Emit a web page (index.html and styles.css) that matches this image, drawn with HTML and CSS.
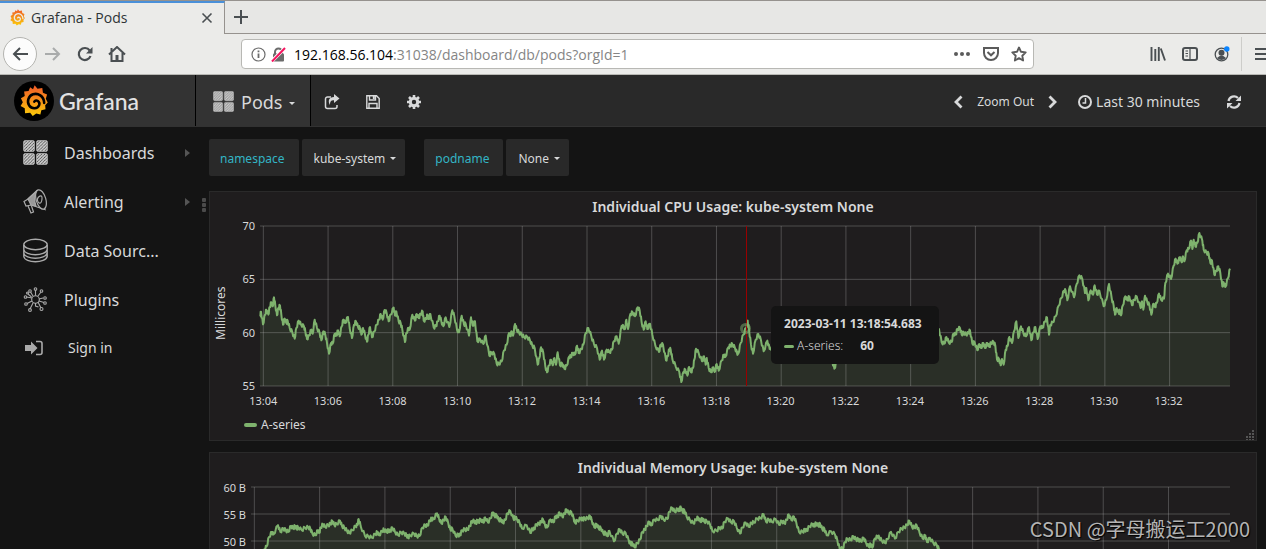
FILE: index.html
```html
<!DOCTYPE html>
<html lang="en">
<head>
<meta charset="utf-8">
<title>Grafana - Pods</title>
<link rel="stylesheet" href="styles.css">
</head>
<body>
<svg class="defs" aria-hidden="true">
  <defs>
    <linearGradient id="flame" x1="0" y1="0" x2="0" y2="1"><stop offset="0" stop-color="#f05a28"/><stop offset="1" stop-color="#fbca0a"/></linearGradient>
    <pattern id="hatch" width="3" height="3" patternUnits="userSpaceOnUse"><path d="M-1 1l2-2M0 3l3-3M2 4l2-2" stroke="#d0d0d0" stroke-width="1.700"/></pattern>
    <symbol id="gear" viewBox="14 10 94 100">
      <path fill="url(#flame)" d="M63 11l9 11 15-3 2 15 13 6-4 13 6 12-8 8 1 13-13 3-3 13-13-3-11 8-8-10-16 1-1-15-13-7 7-12-6-13 12-7-2-14 14-1 5-12 9 6z"/>
      <path fill="none" stroke="currentColor" stroke-width="8" stroke-linecap="round" d="M93 66C92 44 73 34 58 39C43 44 38 62 46 74C54 86 72 85 77 73C81 62 68 53 62 62"/>
    </symbol>
    <symbol id="tiles" viewBox="0 0 24 24">
      <g fill="url(#hatch)" stroke="#b8b8b8" stroke-width=".7"><rect x=".5" y=".5" width="10.500" height="10.500" rx="1.500"/><rect x="13" y=".5" width="10.500" height="10.500" rx="1.500"/><rect x=".5" y="13" width="10.500" height="10.500" rx="1.500"/><rect x="13" y="13" width="10.500" height="10.500" rx="1.500"/></g>
    </symbol>
  </defs>
</svg>

<header class="browser">
  <div class="tabs">
    <div class="tab">
      <svg class="favicon" aria-hidden="true"><use href="#gear"/></svg>
      <span class="tab-title">Grafana - Pods</span>
      <button class="plain" aria-label="Close tab"><svg width="12" height="12" viewBox="0 0 12 12"><path d="M1.500 1.500l9 9M10.500 1.500l-9 9" stroke="#4a4f52" stroke-width="1.600"/></svg></button>
    </div>
    <button class="new-tab" aria-label="New tab"><svg width="14" height="14" viewBox="0 0 14 14"><path d="M7 0v14M0 7h14" stroke="#4a4f52" stroke-width="2"/></svg></button>
  </div>
  <div class="toolbar">
    <button class="back" aria-label="Back"><svg width="18" height="16" viewBox="0 0 18 16"><path d="M17 8H3M9 2L3 8l6 6" fill="none" stroke="#4a4f52" stroke-width="2"/></svg></button>
    <button class="plain" aria-label="Forward"><svg width="18" height="16" viewBox="0 0 18 16"><path d="M1 8h14M9 2l6 6-6 6" fill="none" stroke="#a9abab" stroke-width="2"/></svg></button>
    <button class="plain" aria-label="Reload"><svg width="16" height="16" viewBox="0 0 16 16"><path d="M12.700 4.500A6 6 0 1 0 13.500 10" fill="none" stroke="#4a4f52" stroke-width="2.200"/><path d="M15.500 1v6.500H9z" fill="#4a4f52"/></svg></button>
    <button class="plain" aria-label="Home"><svg width="18" height="16" viewBox="0 0 18 16"><path d="M1 8.500L9 1l8 7.500M3.500 7v8h11V7M3.500 2v4" fill="none" stroke="#4a4f52" stroke-width="2"/><path d="M7.500 9h3v6h-3z" fill="#4a4f52"/></svg></button>
    <div class="address">
      <svg width="15" height="15" viewBox="0 0 15 15" aria-hidden="true"><circle cx="7.500" cy="7.500" r="6.500" fill="none" stroke="#6b6b6b" stroke-width="1.200"/><path d="M7.500 6.500V11M7.500 3.500v1.800" stroke="#6b6b6b" stroke-width="1.800"/></svg>
      <svg width="15" height="15" viewBox="0 0 15 15" aria-hidden="true"><path d="M4 7V5a3.500 3.500 0 0 1 7 0v2" fill="none" stroke="#6b6b6b" stroke-width="2"/><rect x="2" y="6.500" width="11" height="8" rx="1" fill="#6b6b6b"/><path d="M.5 14.500L14 1" stroke="#fff" stroke-width="3.500"/><path d="M1 14.500L14 1" stroke="#f5145f" stroke-width="2"/></svg>
      <a class="url" href="#">192.168.56.104<span class="url-path">:31038/dashboard/db/pods?orgId=1</span></a>
      <button class="plain" aria-label="Page actions"><svg width="18" height="16" viewBox="0 0 18 16" fill="#5b5b5b"><circle cx="3" cy="8" r="2"/><circle cx="9" cy="8" r="2"/><circle cx="15" cy="8" r="2"/></svg></button>
      <button class="plain" aria-label="Save to Pocket"><svg width="16" height="16" viewBox="0 0 16 16"><path d="M1 2h14v5a7 7 0 0 1-14 0zM4.500 6L8 9.300 11.500 6" fill="none" stroke="#5b5b5b" stroke-width="2"/></svg></button>
      <button class="plain" aria-label="Bookmark"><svg width="16" height="16" viewBox="0 0 16 16"><path d="M8 1.500l2 4.300 4.700.6-3.400 3.300.8 4.800L8 12.200l-4.100 2.300.8-4.800L1.300 6.400 6 5.800z" fill="none" stroke="#5b5b5b" stroke-width="1.900" stroke-linejoin="round"/></svg></button>
    </div>
    <div class="browser-tools">
      <button class="plain" aria-label="Library"><svg width="16" height="14" viewBox="0 0 16 14"><path d="M1.500 0v14M5.300 2v12M8.800 0v14M10.800 1.500L15 13.500" stroke="#4a4f52" stroke-width="1.900"/></svg></button>
      <button class="plain" aria-label="Sidebars"><svg width="16" height="14" viewBox="0 0 16 14"><rect x="1" y="1" width="14" height="12" rx="2" fill="none" stroke="#4a4f52" stroke-width="2"/><path d="M8 1v12M3.500 4H6M3.500 6.500H6M3.500 9H6" stroke="#4a4f52" stroke-width="1.200"/></svg></button>
      <button class="plain" aria-label="Account"><svg width="16" height="16" viewBox="0 0 16 16"><circle cx="7.500" cy="8.500" r="6.300" fill="none" stroke="#4a4f52" stroke-width="1.300"/><circle cx="7.500" cy="6.800" r="3" fill="#4a4f52"/><path d="M3 12q4.500-5 9 0-4.500 4-9 0" fill="#4a4f52"/><circle cx="12.800" cy="3" r="2.700" fill="#0a84ff"/></svg></button>
      <span class="tool-divider"></span>
      <button class="plain menu" aria-label="Menu"><svg width="16" height="14" viewBox="0 0 16 14"><path d="M0 2h16M0 7h16M0 12h16" stroke="#4a4f52" stroke-width="2"/></svg></button>
    </div>
  </div>
</header>

<div class="app">
  <nav class="navbar">
    <a class="brand" href="#">
      <span class="brand-mark"><svg width="30" height="32" aria-hidden="true"><use href="#gear"/></svg></span>
      <span class="brand-name">Grafana</span>
    </a>
    <button class="dashboard-picker"><svg width="21" height="21" aria-hidden="true"><use href="#tiles"/></svg><span>Pods</span><i class="caret"></i></button>
    <button class="nav-button" aria-label="Share"><svg width="16" height="16" viewBox="0 0 16 16"><path d="M7 3H3.500A2 2 0 0 0 1.500 5v7.500a2 2 0 0 0 2 2H11a2 2 0 0 0 2-2V11" fill="none" stroke="#d8d9da" stroke-width="1.500"/><path d="M10 0l5.500 4.500L10 9V6.300C7 6 5.800 7.500 6 11 3.500 7 5 3 10 3z" fill="#d8d9da"/></svg></button>
    <button class="nav-button" aria-label="Save"><svg width="14" height="14" viewBox="0 0 14 14"><path d="M.8.800h9.700l2.700 2.700v9.700H.8zM3 13V8.500h8V13M3.500 1v4h6V1" fill="none" stroke="#d8d9da" stroke-width="1.400"/><path d="M6.800 1h2v3h-2z" fill="#d8d9da"/></svg></button>
    <button class="nav-button" aria-label="Settings"><svg width="14" height="14" viewBox="0 0 14 14"><circle cx="7" cy="7" r="3.700" fill="none" stroke="#d8d9da" stroke-width="3"/><path d="M7 0v3M7 11v3M0 7h3M11 7h3M2 2l2 2M10 10l2 2M2 12l2-2M10 4l2-2" stroke="#d8d9da" stroke-width="2.600"/></svg></button>
    <div class="time-controls">
      <button class="nav-button" aria-label="Back in time"><svg width="9" height="14" viewBox="0 0 9 14"><path d="M7.500 1.500L2 7l5.500 5.500" fill="none" stroke="#d8d9da" stroke-width="2.800"/></svg></button>
      <button class="zoom-out">Zoom Out</button>
      <button class="nav-button" aria-label="Forward in time"><svg width="9" height="14" viewBox="0 0 9 14"><path d="M1.500 1.500L7 7l-5.500 5.500" fill="none" stroke="#d8d9da" stroke-width="2.800"/></svg></button>
      <button class="time-range"><svg width="14" height="14" viewBox="0 0 14 14" aria-hidden="true"><circle cx="7" cy="7" r="6" fill="none" stroke="#d8d9da" stroke-width="2"/><path d="M7.500 3v5H4.500" fill="none" stroke="#d8d9da" stroke-width="1.500"/></svg>Last 30 minutes</button>
      <button class="nav-button" aria-label="Refresh"><svg width="14" height="14" viewBox="0 0 14 14"><path d="M1.500 6A5.600 5.600 0 0 1 11 3M12.500 8A5.600 5.600 0 0 1 3 11" fill="none" stroke="#d8d9da" stroke-width="2.200"/><path d="M14 .5V6H8.500zM0 13.500V8h5.500z" fill="#d8d9da"/></svg></button>
    </div>
  </nav>

  <aside class="sidebar">
    <a href="#"><svg width="25" height="25" aria-hidden="true"><use href="#tiles"/></svg><span>Dashboards</span><i class="expand"></i></a>
    <a href="#"><svg width="25" height="25" viewBox="0 0 25 25" fill="none" stroke="#aaa" stroke-width="1.200" aria-hidden="true"><path d="M14 1.500L5 10 1 12.500 3 17l5-1 14 4.500z"/><path d="M14 2L5 10l3 6 5 1q-3-8 1-15" fill="#999"/><ellipse cx="18" cy="10.500" rx="4.800" ry="10" transform="rotate(-16 18 10.500)" fill="#141414"/><path d="M15.500 8q4-3 3.500 2t-3 4q-3-3-.5-6M5 17l3 7 2.500-1-2-6"/></svg><span>Alerting</span><i class="expand"></i></a>
    <a href="#"><svg width="25" height="25" viewBox="0 0 25 25" fill="none" stroke="#aaa" stroke-width="1.400" aria-hidden="true"><ellipse cx="12.500" cy="6.500" rx="11.700" ry="5.200"/><path d="M.8 7v4.500c1 7 22 7 23.400 0V7M.8 11.500v3.500c1 7 22 7 23.400 0v-3.500M.8 15v3.500c1 7 22 7 23.400 0V15"/></svg><span>Data Sourc...</span></a>
    <a href="#"><svg width="25" height="25" viewBox="0 0 25 25" fill="none" stroke="#aaa" stroke-width="1.100" aria-hidden="true"><circle cx="12.500" cy="12.500" r="3.800"/><path d="M12.500 8.500V3M12.500 16v3l3 1M16 14l5 1.500M9 14l-5 2.500M9 11L3.500 10M15 9l3-4M10 9L7.500 5M10 16l-3 6M16 12l4-1M15 15l3 6M8.500 10L5 7"/><circle cx="12.500" cy="2" r="1.300"/><circle cx="18.500" cy="4" r="1.300"/><circle cx="7" cy="4" r="1.300"/><circle cx="22" cy="11" r="1.300"/><circle cx="22" cy="16" r="1.300"/><circle cx="18.500" cy="22" r="1.500"/><circle cx="7" cy="23" r="1.400"/><circle cx="3" cy="17" r="1.300"/><circle cx="2.500" cy="10" r="1.300"/><circle cx="4.500" cy="6" r="1"/></svg><span>Plugins</span></a>
    <a class="sign-in" href="#"><svg width="18" height="16" viewBox="0 0 18 16" aria-hidden="true"><path d="M0 5h6V1.500L12.500 8 6 14.500V11H0z" fill="#aaa"/><path d="M11 1.500h4a2 2 0 0 1 2 2v9a2 2 0 0 1-2 2h-4" fill="none" stroke="#aaa" stroke-width="1.600"/></svg><span>Sign in</span></a>
  </aside>

  <main class="dashboard">
    <form class="variables">
      <div class="variable">
        <label for="namespace">namespace</label>
        <div class="choice"><select id="namespace"><option>kube-system</option></select><i class="caret"></i></div>
      </div>
      <div class="variable">
        <label for="podname">podname</label>
        <div class="choice"><select id="podname"><option>None</option></select><i class="caret"></i></div>
      </div>
    </form>

    <div class="row">
      <div class="row-handle"><i></i><i></i><i></i></div>
      <section class="panel">
        <h2>Individual CPU Usage: kube-system None</h2>
        <div class="graph">
          <span class="axis-name">Millicores</span>
          <div class="y-axis"><span>70</span><span>65</span><span>60</span><span>55</span></div>
          <div class="plot">
            <svg id="cpu" viewBox="165 19 2910 480" preserveAspectRatio="none" role="img" aria-label="CPU usage"></svg>
            <i class="crosshair"></i><i class="hover-point"></i>
            <div class="tooltip"><strong>2023-03-11 13:18:54.683</strong><div class="tooltip-row"><i class="swatch"></i><span>A-series:</span><b>60</b></div></div>
          </div>
          <div class="x-axis"><span>13:04</span><span>13:06</span><span>13:08</span><span>13:10</span><span>13:12</span><span>13:14</span><span>13:16</span><span>13:18</span><span>13:20</span><span>13:22</span><span>13:24</span><span>13:26</span><span>13:28</span><span>13:30</span><span>13:32</span></div>
        </div>
        <a class="legend" href="#"><i class="swatch"></i>A-series</a>
        <svg class="resize" width="10" height="10" viewBox="0 0 10 10" fill="#555" aria-hidden="true"><path d="M7 0h2v2H7zM7 3h2v2H7zM7 6h2v2H7zM7 9h2v1H7zM4 3h2v2H4zM4 6h2v2H4zM4 9h2v1H4zM1 6h2v2H1zM1 9h2v1H1z"/></svg>
      </section>
      <section class="panel">
        <h2>Individual Memory Usage: kube-system None</h2>
        <div class="graph memory">
          <div class="y-axis"><span>60 B</span><span>55 B</span><span>50 B</span></div>
          <div class="plot"><svg id="memory" viewBox="138 142 2937 480" preserveAspectRatio="none" role="img" aria-label="Memory usage"></svg></div>
        </div>
      </section>
    </div>
  </main>
</div>
<div class="watermark">CSDN @字母搬运工2000</div>
<script src="charts.js"></script>
</body>
</html>
```

FILE: styles.css
```css
* { box-sizing: border-box; }
body {
  margin: 0;
  height: 100vh;
  display: flex;
  flex-direction: column;
  overflow: hidden;
  position: relative;
  background: #141414;
  color: #d8d9da;
  font-family: "Noto Sans", "Open Sans", sans-serif;
  font-size: 12px;
}
button, select { font: inherit; color: inherit; border: 0; background: none; padding: 0; }
a { color: inherit; text-decoration: none; }
svg { display: block; flex: none; }
.defs { position: absolute; width: 0; height: 0; }

.browser { flex: none; background: #ebebe9; border-bottom: 1px solid #b8b8b4; color: #2e3436; font-family: "Open Sans", sans-serif; }
.tabs { display: flex; height: 34px; border-top: 1px solid #96928e; }
.tab { display: flex; align-items: center; width: 225px; padding: 0 11px 2px 9px; gap: 6px; border-top: 2px solid #4a90d9; border-right: 1px solid #96928e; }
.tab-title { flex: 1; font-size: 14px; }
.favicon { width: 17px; height: 17px; margin-right: -1px; color: #ebebe9; }
.new-tab { flex: 1; padding-left: 9px; background: #e7e7e5; border-bottom: 1px solid #96928e; }
.toolbar { display: flex; align-items: center; height: 40px; padding-left: 3px; }
.plain { display: grid; place-items: center; flex: none; }
.back { display: grid; place-items: center; width: 34px; height: 34px; border: 1px solid #b4b4b0; border-radius: 50%; background: #fcfcfc; margin-right: 7px; }
.toolbar > .plain { margin-right: 15px; }
.address { display: flex; align-items: center; flex: 1; height: 30px; margin-left: 100px; padding: 0 6px 0 9px; gap: 5px; background: #fff; border: 1px solid #b8b8b4; border-radius: 4px; }
.url { flex: 1; margin-left: 3px; font-size: 14px; color: #000; }
.url-path { color: #858585; }
.address .plain { margin-left: 7px; }
.browser-tools { display: flex; align-items: center; gap: 16px; margin-left: 116px; }
.tool-divider { width: 1px; height: 34px; background: #cdcdca; margin-left: -5px; }
.menu { width: 11px; overflow: hidden; justify-content: start; margin-left: -3px; }

.app { flex: 1; min-height: 0; display: grid; grid-template: 52px 1fr / 196px 1fr; }
.navbar { grid-column: 1 / 3; display: flex; align-items: stretch; background: #292929; border-bottom: 1px solid #323232; }
.brand { display: flex; align-items: center; gap: 5px; width: 196px; padding-left: 14px; background: #333; border-right: 1px solid #000; }
.brand-mark { display: grid; place-items: center; width: 40px; height: 40px; border-radius: 50%; background: #000; color: #000; }
.brand-name { font-family: Lato, sans-serif; font-size: 23px; font-weight: 500; color: #e3e3e3; }
.navbar button { padding-top: 2px; }
.navbar .dashboard-picker { display: flex; align-items: center; width: 115px; padding-left: 17px; gap: 7px; background: #333; border-right: 1px solid #000; font-size: 18px; }
.dashboard-picker .caret { margin-top: 4px; }
.caret { border: solid transparent; border-width: 3px 3px 0; border-top-color: #d8d9da; flex: none; }
.nav-button { display: grid; place-items: center; width: 41px; }
.time-controls { display: flex; margin-left: auto; padding-right: 12px; }
.time-controls .nav-button { width: 37px; }
.time-controls .nav-button:last-child { width: 40px; }
.time-range { display: flex; align-items: center; gap: 4px; font-size: 14px; margin: 0 14px 0 7px; }

.sidebar { padding-top: 1px; font-size: 16px; }
.sidebar a { display: flex; align-items: center; height: 49px; padding: 0 6px 0 23px; gap: 16px; }
.sidebar span { flex: 1; }
.expand { border: solid transparent; border-width: 4px 0 4px 5px; border-left-color: #555; }
.sidebar .sign-in { height: 47px; padding-left: 25px; gap: 25px; font-size: 14px; }

.dashboard { min-width: 0; min-height: 0; overflow: hidden; padding: 12px 9px 0 0; }
.variables { display: flex; gap: 19px; padding-left: 13px; margin-bottom: 15px; }
.variable { display: flex; gap: 3px; height: 37px; }
.variable label { display: flex; align-items: center; padding: 2px 14px 0 11px; background: #292929; color: #33b5c5; border-radius: 2px; }
.choice { display: flex; align-items: center; background: #292929; border-radius: 2px; padding: 2px 9px 0 0; }
.choice select { appearance: none; field-sizing: content; height: 100%; padding: 0 5px 0 12px; }

.row { display: grid; grid-template-columns: 13px minmax(0, 1fr); gap: 11px 0; }
.row-handle { display: grid; gap: 1px; align-content: start; padding: 7px 0 0 6px; }
.row-handle i { width: 4px; height: 4px; background: #4b4b4b; border-radius: 1px; }
.panel { grid-column: 2; position: relative; height: 250px; background: #1f1d1e; border: 1px solid #2a2a2a; }
.panel h2 { margin: 0; height: 34px; line-height: 30px; text-align: center; font-size: 14px; font-weight: 600; }
.graph { display: grid; grid-template: 160px 30px / 22px 28px minmax(0, 1fr); padding-right: 26px; font-size: 11px; }
.axis-name { writing-mode: vertical-rl; transform: rotate(180deg); text-align: center; font-size: 12px; padding: 0 0 14px; margin-left: 2px; }
.y-axis { display: flex; flex-direction: column; justify-content: space-between; align-items: flex-end; margin: -8px 5px; line-height: 16px; white-space: nowrap; }
.plot { position: relative; }
.plot svg { width: 100%; height: 100%; overflow: visible; }
.plot path { vector-effect: non-scaling-stroke; }
.grid-line { stroke: rgba(200, 200, 200, .28); stroke-width: 1; fill: none; }
.series { stroke: #7eb26d; stroke-width: 2; fill: none; stroke-linejoin: round; }
.area { fill: rgba(126, 178, 109, .12); }
.x-axis { grid-column: 3; display: grid; grid-template-columns: repeat(15, 1fr); margin: 0 3% 0 -3%; text-align: center; line-height: 30px; }
.memory { grid-template: 162px / 41px minmax(0, 1fr); }
.memory .y-axis { justify-content: flex-start; margin: -13px 5px 0; line-height: 27px; }
.legend { display: flex; align-items: center; gap: 4px; margin-left: 34px; line-height: 18px; }
.swatch { width: 13px; height: 4px; border-radius: 2px; background: #7eb26d; }
.crosshair { position: absolute; top: 0; bottom: 0; left: 50%; width: 1px; margin-left: 1px; background: #900; }
.hover-point { position: absolute; left: 50%; top: 64%; width: 11px; height: 11px; margin-left: -5px; margin-top: -5px; border: 3px solid rgba(126, 178, 109, .5); border-radius: 50%; }
.tooltip { position: absolute; left: 53%; top: 50%; width: 168px; height: 58px; padding: 9px 13px; background: #141414; border-radius: 5px; line-height: 18px; margin-left: -3px; font-size: 12px; white-space: nowrap; }
.tooltip-row { display: flex; align-items: center; margin-top: 4px; font-weight: 300; }
.tooltip .swatch { width: 10px; height: 3px; margin-right: 3px; }
.tooltip b { margin-left: 17px; font-weight: 700; }
.resize { position: absolute; right: 1px; bottom: 0; }
.watermark { position: absolute; right: 16px; bottom: 6px; font: 20px/28px "Noto Sans CJK SC", sans-serif; color: #b4b4b4; text-shadow: 1px 1px 1px #000; }
```

FILE: charts.js
```js
// Each chunk is an x offset followed by "x,y" pairs relative to it.
const cpu = [
  [0, "165,290 168,276 174,314 180,285 184,270 190,285 194,262 199,248 203,260 207,233 211,258 216,287 220,265 225,258 229,285 234,315 239,297 244,310 248,303 254,325 262,338 269,357 274,325 281,303 288,315 297,320 301,335 306,358 312,348 319,330 323,342 329,300 336,325 344,340 349,362 355,335 361,345 366,370 372,402 378,370 383,372 389,342 394,348 399,332 404,350 410,320 415,300 420,310 429,292 434,325 441,355 447,315 453,305 459,322 465,325 469,345 474,325 480,345 486,366 490,345 495,322 501,353 508,335 515,315 522,300 527,283 533,300 539,271 545,280 551,305 557,285 566,264 570,288 574,275 581,305 587,310 592,330 600,367 604,340 611,325 614,330 622,285 630,303 635,283 641,295 647,283 653,275 656,303 664,298 667,285 671,298 676,283 686,323 693,320 698,305 704,288 709,305 715,320 722,293 733,322 742,272 748,290 756,330 762,338 770,288 777,315 782,312 792,348"],
  [795, "3,293 8,318 15,305 22,365 30,358 40,373 47,348 58,408 64,398 73,403 80,432 86,433 95,425 102,392 110,375 117,340 121,350 125,335 129,348 135,313 140,330 147,338 155,345 162,352 172,352 180,362 187,378 194,385 203,435 208,415 213,383 220,400 226,440 231,458 237,437 243,420 248,437 253,415 258,435 263,398 270,437 277,432 283,447 290,438 298,410 302,412 308,400 315,405 321,378 326,400 334,388 340,375 347,340 355,325 364,350 372,373 381,385 389,420 396,393 402,420 410,390 418,398 426,390 431,365 440,350 446,372 455,318 461,322 465,328 469,300 474,328 481,283 488,278 495,290 503,263 509,272 515,308 521,330 527,305 532,328 540,312 547,345 556,378 567,397 572,375 579,375 588,422 593,410 598,388 602,390 607,418 617,440 628,457 634,487 640,457 646,450 652,468 657,442 663,458 669,445 673,420 678,387 686,400 696,425 702,410 707,435 710,415 716,445 723,458 730,443 734,457 740,433 746,453 755,422 762,405 766,412 775,383 781,378 787,373"],
  [1590, "0,385 6,400 10,402 17,370 25,345 33,325 38,303 42,330 48,375 54,402 62,360 70,343 78,362 86,395 97,363 104,388 115,380 160,395 210,385 260,405 292,425 298,447 305,425 340,395 400,385 500,350 600,360 612,328 620,368 628,372 634,352 641,368 650,367 655,342 662,345 667,328 675,325 680,345 686,338 693,345 700,340 705,332 712,372 719,368 727,392 733,373 738,385 745,370 750,385 757,370 763,382 768,368 776,368 781,378 786,420 792,418"],
  [2385, "2,437 6,418 11,435 17,390 22,380 28,352 36,370 42,335 49,305 55,355 63,320 70,340 78,350 87,322 94,362 100,338 106,322 113,358 121,320 127,325 135,305 141,293 147,345 151,315 158,308 167,290 176,258 184,235 192,213 197,213 202,242 210,200 222,233 230,193 238,167 247,178 255,220 259,205 265,242 272,212 279,225 284,197 291,225 298,213 311,260 319,240 327,193 335,235 341,258 345,285 350,265 357,283 359,270 363,287 368,258 376,230 382,242 388,230 396,257 402,240 410,230 422,265 426,245 430,270 435,228 442,248 448,255 454,285 460,252 465,262 470,250 477,222 483,240 492,237 496,190 504,162 513,178 521,138 527,117 532,132 540,112 545,128 549,110 553,125 560,92 566,88 573,63 577,88 581,60 586,80 592,70 598,40 607,63 611,90 620,100 626,102 631,130 636,123 643,165 648,155 655,140 661,160 667,200 671,188 676,202 684,175 690,147"]
];
const memory = [
  [0, "138,420 165,350 178,327 185,318 192,290 201,275 205,283 219,255 226,275 235,265 242,270 250,275 258,257 265,265 270,257 275,266 279,260 290,270 300,262 310,262 316,265 322,280 331,285 339,270 343,278 347,262 354,252 360,260 370,255 376,252 382,242 388,255 395,252 405,242 411,258 418,262 426,272 433,278 442,270 452,257 457,255 461,237 467,258 480,287 490,288 500,292 511,282 517,275 522,285 532,272 537,268 545,275 551,270 555,274 562,262 570,275 579,285 588,276 598,280 605,285 609,292 615,285 627,280 635,287 644,287 652,262 661,255 667,257 675,240 680,236 685,238 696,220 702,235 709,250 716,240 722,230 730,250 736,268 742,265 752,287 760,283 765,286 771,270 780,268 787,268 795,258 800,243 808,243 813,250 817,240 820,247 827,237 835,248 840,232 849,247 856,235 864,217 868,228 875,225 881,240 888,238 893,248 901,240 907,220 916,213 926,238 929,230 936,238 944,248 951,265 965,255 976,278 982,265 987,268 994,252 1002,252 1008,245 1014,237 1020,255 1026,262 1036,238 1045,247 1052,228 1058,232 1063,217 1072,230 1078,222 1084,208 1091,220 1099,216 1106,235"],
  [1110, "0,248 8,242 17,235 23,238 29,235 38,235 45,228 50,240 58,262 65,252 71,265 77,262 85,280 92,277 97,288 103,272 117,303 126,280 134,267 142,280 152,278 161,300 167,312 172,308 179,321 187,308 195,298 202,275 210,268 214,258 223,245 228,256 238,238 248,240 258,228 265,238 277,237 283,215 291,203 299,215 308,207 313,213 317,200 323,217 328,210 335,230 345,240 355,250 363,238 369,232 376,245 382,235 388,245 395,242 405,253 412,272 425,272 433,262 442,265 448,245 459,235 468,247 477,243 485,262 495,280 502,262 512,247 521,260 530,248 536,247 547,235 556,235 566,223 573,245 582,238 590,245 602,237 612,254 620,242 628,250 635,240 641,223 649,240 657,230 664,248 672,275 683,275 690,268 695,272 703,258 713,252 718,258 723,248 730,258 735,250 742,268 748,265 755,285 768,273 780,283 787,300 794,325 803,325 810,305 817,295 827,300 835,288 843,298 850,297 857,303 866,293 873,307 882,320 887,310 892,322 899,295 908,288 913,292 920,300 930,308 937,297 948,275 960,295 970,275 980,265 988,262 996,255 1003,242 1011,260 1018,262 1025,255 1033,275 1043,295 1051,285 1056,305 1065,293 1075,308 1085,313 1092,327 1200,380 1965,400"]
];

function points(chunks) {
  return chunks.flatMap(([offset, text]) => text.split(" ").map(pair => {
    const [x, y] = pair.split(",").map(Number);
    return [x + offset, y];
  }));
}

// Adds the small sample-to-sample wobble between neighbouring points.
function wobble(list) {
  const result = [];
  list.forEach(([x, y], i) => {
    result.push([x, y]);
    const next = list[i + 1];
    if (next && next[0] - x < 30) {
      const dx = next[0] - x;
      const dy = next[1] - y;
      result.push([x + dx * 0.35, y + dy * 0.35 + 5]);
      result.push([x + dx * 0.65, y + dy * 0.65 - 5]);
    }
  });
  return result;
}

function draw(id, chunks, xStart, xStep, xCount, yLines) {
  const svg = document.getElementById(id);
  const box = svg.viewBox.baseVal;
  const right = box.x + box.width;
  const bottom = box.y + box.height;
  const line = "M" + wobble(points(chunks)).map(p => p.join(" ")).join("L");
  let grid = "";
  for (let i = 0; i < xCount; i++) grid += `M${xStart + i * xStep} ${box.y}V${bottom}`;
  for (let i = 0; i <= yLines; i++) grid += `M${box.x} ${box.y + box.height / yLines * i}H${right}`;
  svg.innerHTML = `<path class="area" d="${line}V${bottom}H${box.x}Z"/><path class="grid-line" d="${grid}"/><path class="series" d="${line}"/>`;
}

draw("cpu", cpu, 175, 194.2, 15, 3);
draw("memory", memory, 148, 195.9, 15, 6);
```
